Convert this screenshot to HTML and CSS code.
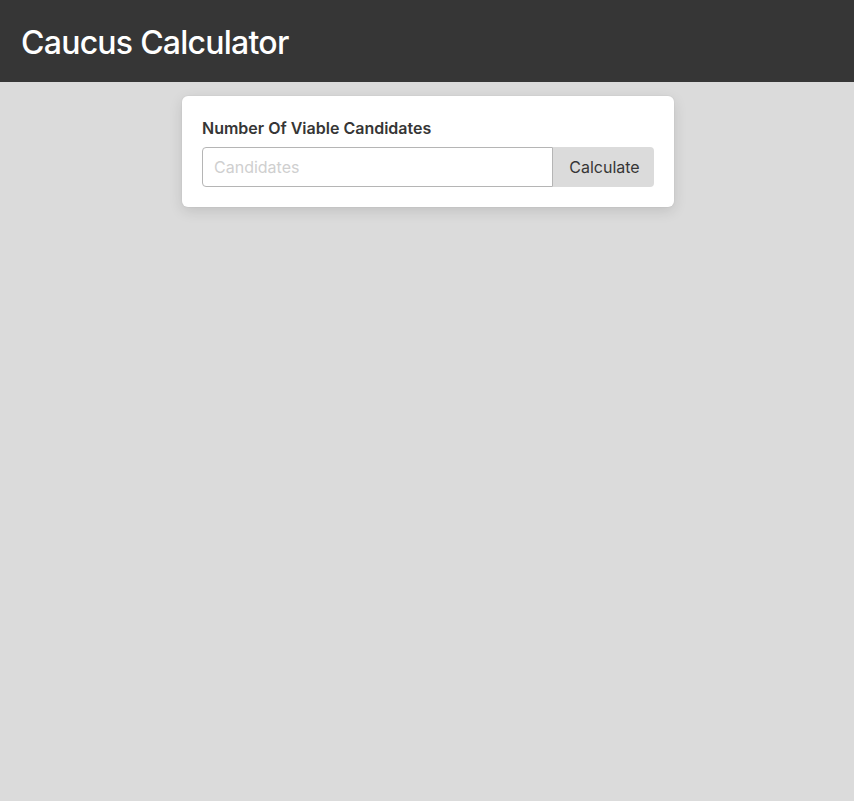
FILE: index.html
```html
<!DOCTYPE html>
<html lang="en">
<head>
<meta charset="utf-8">
<title>Caucus Calculator</title>
<link rel="stylesheet" href="styles.css">
</head>
<body>
<header class="navbar">
  <h1 class="title">Caucus Calculator</h1>
</header>
<main class="main">
  <section class="card">
    <label class="label" for="cand">Number Of Viable Candidates</label>
    <div class="field">
      <input id="cand" class="input" type="text" placeholder="Candidates">
      <button class="button" type="button">Calculate</button>
    </div>
  </section>
</main>
</body>
</html>
```
FILE: styles.css
```css
* { box-sizing: border-box; }
html, body { margin: 0; padding: 0; }
body {
  background: #dbdbdb;
  font-family: Inter, "Noto Sans", "Liberation Sans", sans-serif;
  color: #363636;
  min-height: 801px;
}
.navbar {
  background: #363636;
  height: 82px;
  display: flex;
  align-items: center;
  padding: 4px 21px 0;
}
.title {
  margin: 0;
  color: #fff;
  font-size: 32px;
  font-weight: 500;
  letter-spacing: -0.75px;
  line-height: 1;
}
.main {
  display: flex;
  justify-content: center;
  padding: 14px 0 0 2px;
}
.card {
  width: 492px;
  background: #fff;
  border-radius: 6px;
  box-shadow: 0 4px 14px rgba(10,10,10,0.12), 0 0 0 1px rgba(10,10,10,0.02);
  padding: 20px;
}
.label {
  display: block;
  font-size: 16px;
  font-weight: 600;
  line-height: 24px;
  margin-bottom: 7px;
  color: #363636;
}
.field {
  display: flex;
}
.input {
  flex: 1;
  height: 40px;
  border: 1px solid #b5b5b5;
  border-radius: 4px 0 0 4px;
  padding: 0 11px;
  font-family: inherit;
  font-size: 16px;
  color: #363636;
  background: #fff;
  outline: none;
}
.input::placeholder { color: #cfcfcf; }
.button {
  width: 101px;
  height: 40px;
  border: none;
  border-radius: 0 4px 4px 0;
  background: #dbdbdb;
  font-family: inherit;
  font-size: 16px;
  color: #363636;
  padding: 0 0 0 2px;
  cursor: pointer;
}
```
